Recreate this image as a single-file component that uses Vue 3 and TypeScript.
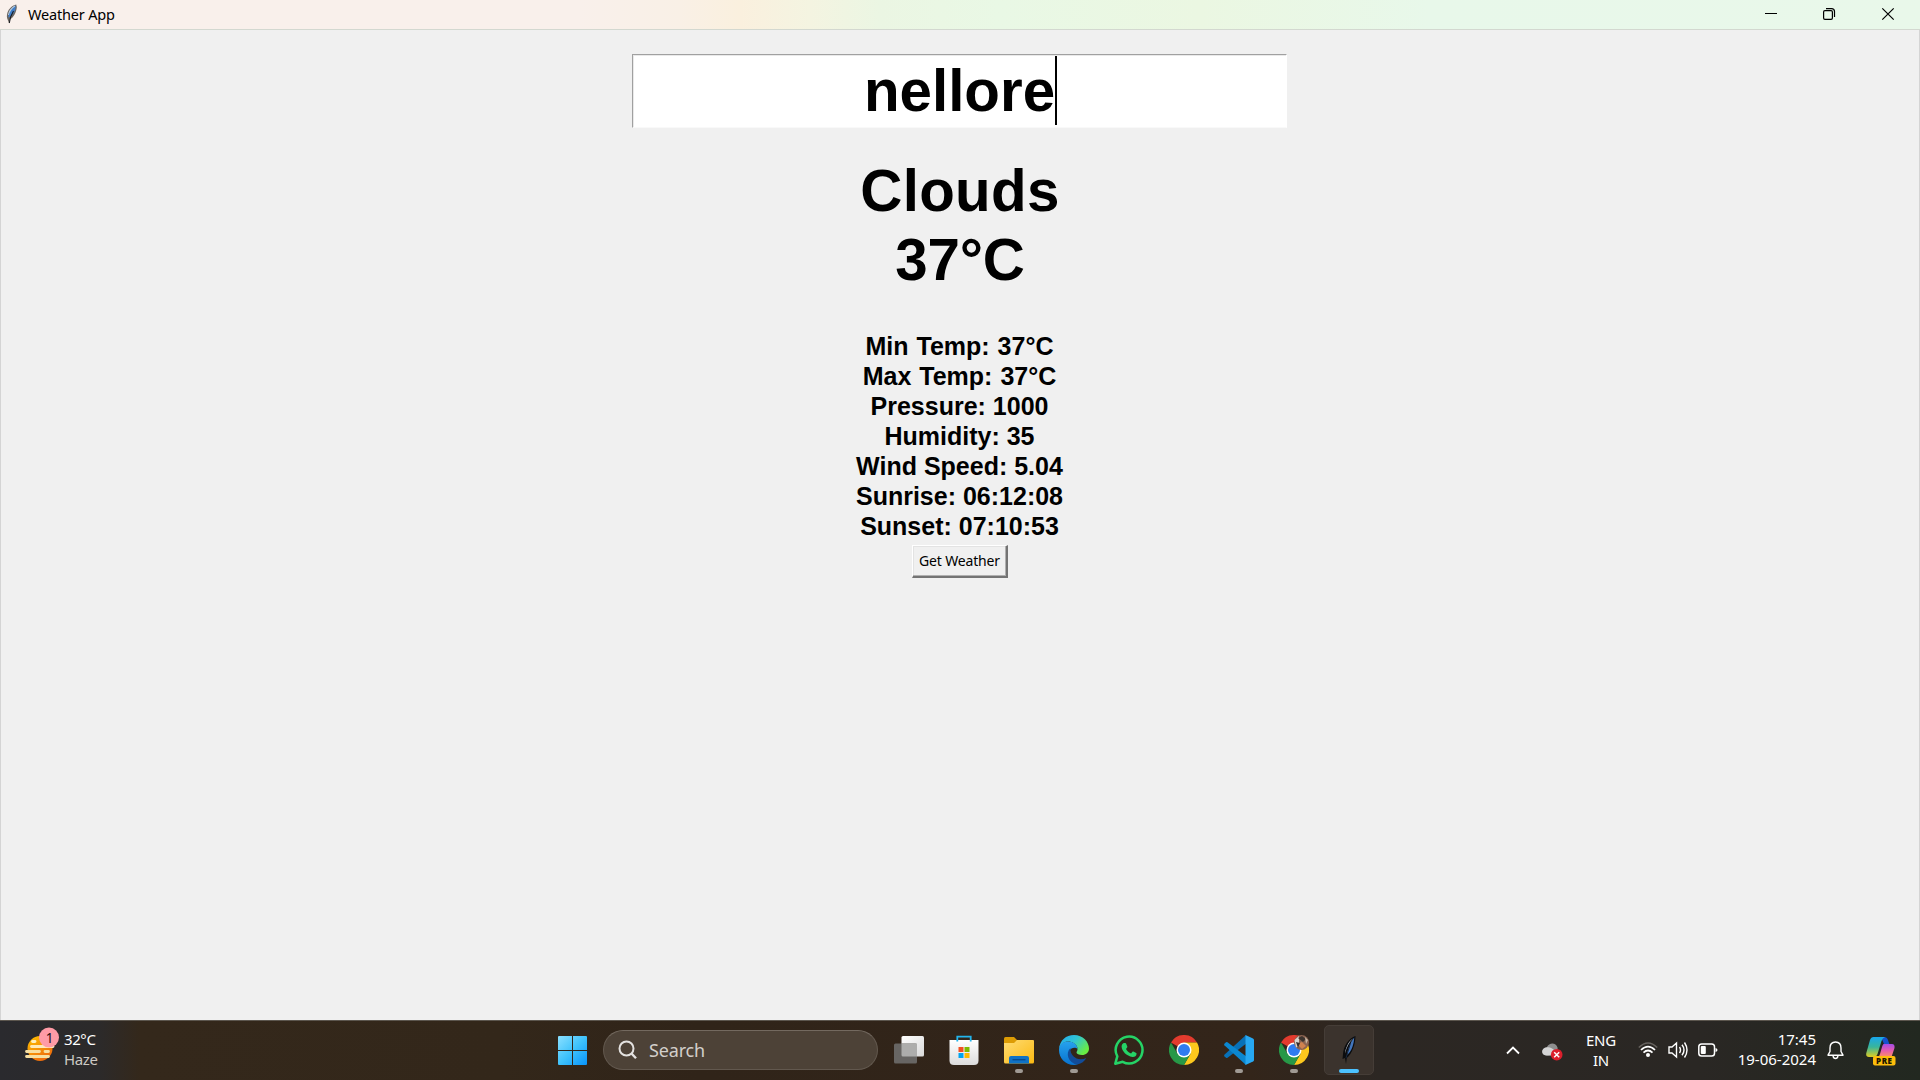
<script setup lang="ts">
const details: string[] = [
  'Min Temp: 37°C',
  'Max Temp: 37°C',
  'Pressure: 1000',
  'Humidity: 35',
  'Wind Speed: 5.04',
  'Sunrise: 06:12:08',
  'Sunset: 07:10:53',
]
</script>

<template>
  <div class="screen">
    <header class="titlebar">
      <svg class="feather" width="12" height="20" viewBox="0 0 12 20">
        <path d="M10.2.6C6.500 1.500 3 4.500 1.500 8.500.6 11.500.7 13.500 1.800 16L3.200 19.500 4 15.500C7.500 13.500 10.500 8 10.800 3Z" fill="#6b6661" />
        <path d="M9.700 1.600C6 3.500 3 7 2.300 13.500 6.500 12 9.800 7.500 9.700 1.600Z" fill="#3f7fcb" />
        <path d="M8.800 2C5 4.500 3 8 2.400 11" stroke="#b8cce0" stroke-width="1.100" fill="none" />
        <path d="M7.500 7C5.500 10 4 13 3.300 19" stroke="#16181c" stroke-width="1.100" fill="none" />
      </svg>
      <span class="title">Weather App</span>
      <div class="controls">
        <svg width="58" height="29" viewBox="0 0 58 29"><path d="M23 13.500h12" stroke="#000" /></svg>
        <svg width="58" height="29" viewBox="0 0 58 29" fill="none" stroke="#000" stroke-width="1.200">
          <rect x="23.600" y="10.600" width="8.800" height="8.800" rx="1.300" />
          <path d="M26 8.600h5.500q3 0 3 3v5.500" />
        </svg>
        <svg width="60" height="29" viewBox="0 0 60 29"><path d="M24.300 8.300l11.400 11.400M35.700 8.300L24.300 19.700" stroke="#000" stroke-width="1.200" /></svg>
      </div>
    </header>

    <main class="client">
      <div class="entry"><span>nellore</span><i class="caret"></i></div>
      <div class="summary">
        <div>Clouds</div>
        <div class="temp">37°C</div>
      </div>
      <div class="details">
        <div v-for="line in details" :key="line">{{ line }}</div>
      </div>
      <button class="fetch" type="button">Get Weather</button>
    </main>

    <footer class="taskbar">
      <div class="weather">
        <svg width="36" height="38" viewBox="0 0 36 38">
          <defs>
            <linearGradient id="sun" x1="0" y1="0" x2=".6" y2="1"><stop offset="0" stop-color="#ffc400" /><stop offset="1" stop-color="#ee6a0c" /></linearGradient>
          </defs>
          <circle cx="16" cy="21.500" r="12.500" fill="url(#sun)" />
          <g stroke-linecap="round" stroke-width="2.800" stroke="#f7dfa0">
            <path d="M8.500 14.500h2.500" stroke="#fff0c0" /><path d="M7.500 19.500H29" stroke="#ffeab8" /><path d="M2.500 24.500h13M21 24.500h3.500M2.500 29.500h22" />
          </g>
          <circle cx="25" cy="10.500" r="10" fill="#ff9ba6" />
          <text x="25.500" y="15.500" class="badge-text">1</text>
        </svg>
        <div class="weather-text"><span>32°C</span><span class="dim">Haze</span></div>
      </div>

      <div class="apps">
        <svg class="start" width="29" height="29" viewBox="0 0 29 29">
          <defs><linearGradient id="win" x1="0" y1="0" x2="29" y2="29" gradientUnits="userSpaceOnUse"><stop offset="0" stop-color="#8be0ff" /><stop offset=".5" stop-color="#3fc2fb" /><stop offset="1" stop-color="#0894fb" /></linearGradient></defs>
          <path d="M1 0h13v14H0V1q0-1 1-1ZM15 0h13q1 0 1 1v13H15ZM0 15h14v14H1q-1 0-1-1ZM15 15h14v13q0 1-1 1H15Z" fill="url(#win)" />
        </svg>

        <div class="search">
          <svg width="20" height="20" viewBox="0 0 20 20" fill="none" stroke="#e4e2e0" stroke-width="2"><circle cx="8.500" cy="8.500" r="7" /><path d="M13.500 13.500l4.500 4.800" stroke-width="2.400" /></svg>
          <span>Search</span>
        </div>

        <div class="app">
          <svg width="30" height="30" viewBox="0 0 30 30">
            <defs><linearGradient id="tv" x1="0" y1="0" x2="1" y2="1"><stop offset="0" stop-color="#fff" /><stop offset="1" stop-color="#d9d9d9" /></linearGradient></defs>
            <rect x="7.500" y="1" width="22.500" height="20.500" rx="1.500" fill="url(#tv)" />
            <rect x="0" y="8.500" width="23" height="20" rx="1.500" fill="#676563" />
            <path d="M7.500 8.500H23v13H9q-1.500 0-1.500-1.500Z" fill="#adadac" />
          </svg>
        </div>
        <div class="app">
          <svg width="30" height="30" viewBox="0 0 30 30">
            <defs><linearGradient id="bag" x1="0" y1="0" x2="0" y2="1"><stop offset="0" stop-color="#fff" /><stop offset="1" stop-color="#dcdcdc" /></linearGradient></defs>
            <path d="M.5 5h29v20.500q0 4.500-4.500 4.500H5Q.5 30 .5 25.500Z" fill="url(#bag)" />
            <path d="M8.300 6.500V1.700h13.400v4.800" stroke="#23b5ec" stroke-width="1.800" fill="none" />
            <path d="M9.500 12h5v5h-5Z" fill="#f25022" /><path d="M15.500 12h5v5h-5Z" fill="#7fba00" /><path d="M9.500 18h5v5h-5Z" fill="#00a4ef" /><path d="M15.500 18h5v5h-5Z" fill="#ffb900" />
          </svg>
        </div>
        <div class="app running">
          <svg width="30" height="30" viewBox="0 0 30 30">
            <defs><linearGradient id="fold" x1="0" y1="0" x2="1" y2="1"><stop offset="0" stop-color="#ffdc73" /><stop offset="1" stop-color="#fbb912" /></linearGradient></defs>
            <path d="M0 3.500Q0 2 1.500 2h8.500l3 3v3H0Z" fill="#dd9c04" />
            <path d="M0 8h10l3-3h16q1 0 1 1v21q0 1.500-1.500 1.500h-27Q0 28.500 0 27Z" fill="url(#fold)" />
            <path d="M5 28.500V23q0-2 2-2h16q2 0 2 2v5.500Z" fill="#0f72c6" /><path d="M8.500 24.700h13" stroke="#064b91" stroke-width="1.400" />
          </svg>
        </div>
        <div class="app running">
          <svg width="30" height="30" viewBox="0 0 30 30">
            <defs>
              <linearGradient id="e1" x1="0" y1="0" x2="1" y2=".6"><stop offset="0" stop-color="#22a7ee" /><stop offset=".5" stop-color="#30c4d5" /><stop offset="1" stop-color="#69ec43" /></linearGradient>
              <linearGradient id="e2" x1="0" y1="0" x2="0" y2="1"><stop offset="0" stop-color="#26a2ee" /><stop offset="1" stop-color="#0872ce" /></linearGradient>
            </defs>
            <path d="M0 14C1 5 7 0 15 0c9 0 15 7 15 13.500 0 4-3 6.500-7 6.500-3 0-5.500-1-5.500-2.500 0-1 1-1.500 1-3.500C18.500 9 13 6.500 9 6.500 5 6.500 2 9 0 14Z" fill="url(#e1)" />
            <path d="M0 15C0 9 5 6.500 9 6.500c5.500 0 9.500 3.500 9.500 7.500-1.500-2-6.500-2-8 2-1.500 5 2 12 8.500 13.500C8 32 0 24 0 15Z" fill="url(#e2)" />
            <path d="M11.500 13C6 18 9 28 18.500 29.600c4-1 7-3.300 8.800-6.600C19 27 10.500 21 11.500 13Z" fill="#124c99" />
          </svg>
        </div>
        <div class="app">
          <svg width="30" height="30" viewBox="0 0 30 30">
            <path d="M1.300 28.700l2-7.300A13.400 13.400 0 1 1 8.700 26.800Z" fill="none" stroke="#25d366" stroke-width="2.500" stroke-linejoin="round" />
            <path d="M9.800 8h1.500q.6 0 .9.700l1.100 2.700q.2.600-.2 1.100l-1.100 1.400c1.200 2.200 2.800 3.500 5.100 4.500l1.300-1.600q.4-.5 1-.2l2.800 1.300q.5.300.4.900c-.2 2.300-2 3.400-4.100 3.200C12.500 21.200 7.800 16 7.600 11.800 7.500 10 8.700 8.100 9.800 8Z" fill="#25d366" />
          </svg>
        </div>
        <div v-for="n in 3" :key="n" class="app" :class="{ running: n > 1 }">
          <svg v-if="n !== 2" width="30" height="30" viewBox="0 0 30 30">
            <path d="M15 15L2 7.500A15 15 0 0 1 28 7.500H15Z" fill="#e33b2e" />
            <path d="M15 7.500h13A15 15 0 0 1 15 30l6.500-11.200Z" fill="#fdc81d" />
            <path d="M2 7.500A15 15 0 0 0 15 30l6.500-11.200H8.500Z" fill="#279847" />
            <circle cx="15" cy="15" r="7.500" fill="#fff" /><circle cx="15" cy="15" r="6" fill="#2f7cf0" />
            <g v-if="n === 3">
              <circle cx="22.500" cy="7.500" r="7.500" fill="#8b6350" />
              <path d="M15.500 5L20 1v10l-3 1.500Z" fill="#d8d5cf" /><path d="M19 3l4-2 4 3-3 3Z" fill="#3c342f" /><path d="M18 9l5-2 4 4-4 3Z" fill="#d0824f" /><path d="M26 2l3 3-2 4Z" fill="#c9b9a7" /><path d="M17 7l4 1-2 5Z" fill="#342c2c" />
            </g>
          </svg>
          <svg v-else width="30" height="30" viewBox="0 0 30 30">
            <path d="M22 0v8.800L3.500 22.700q-.8.500-1.500 0L.4 21.200q-.6-.7 0-1.400Z" fill="#0871b8" />
            <path d="M22 30v-8.800L3.500 7.300Q2.700 6.800 2 7.300L.4 8.800q-.6.700 0 1.400Z" fill="#0b87d1" />
            <path d="M21.500 0L29 3.500q1 .5 1 1.500v20q0 1-1 1.500L21.500 30Z" fill="#27a8f2" />
          </svg>
        </div>
        <div class="app active">
          <svg width="16" height="30" viewBox="0 0 16 30">
            <path d="M14.500 1C8 3 2.500 11 2 19l-.5 5L4 23l1 6 .8-6C11 19 14.500 9 14.500 1Z" fill="#0b0c0e" />
            <path d="M13.200 2.500C11 5 7 12 6 20 10.500 16.500 13 9 13.200 2.500Z" fill="#4376bd" />
            <path d="M12 3.500C7.500 6.500 4.500 13 4 18.500 5.500 12 8 7.500 12 3.500Z" fill="#d3dce6" />
            <path d="M9.500 8L5 23" stroke="#16263d" stroke-width="1" />
          </svg>
        </div>
      </div>

      <div class="tray">
        <svg class="chevron" width="14" height="9" viewBox="0 0 14 9"><path d="M1 7.500L7 1.500l6 6" fill="none" stroke="#fff" stroke-width="1.800" /></svg>
        <svg class="cloud" width="21" height="18" viewBox="0 0 21 18">
          <path d="M5 4C7-.5 14-.8 15.500 4.500c1 2-3 8.500-10.500 8C-1 12-1 4.500 5 4Z" fill="#8e8e8e" />
          <path d="M4.500 4.500c3-1 6 1 8 3v5H4C-1.500 12-1 5 4.500 4.500Z" fill="#d4d4d4" />
          <circle cx="14.700" cy="11.700" r="5.800" fill="#dc1f2c" /><path d="M12.200 9.200l5 5m0-5l-5 5" stroke="#fff" stroke-width="1.500" />
        </svg>
        <div class="lang"><span>ENG</span><span>IN</span></div>
        <svg class="wifi" width="20" height="16" viewBox="0 0 20 16" fill="none" stroke-width="1.500">
          <path d="M.8 5.500Q10-3.500 19.200 5.500" stroke="#67635f" /><path d="M3 8Q10 1 17 8M5.500 10.600q4.500-4.200 9 0" stroke="#fff" stroke-width="1.700" /><circle cx="10" cy="13" r="2" fill="#fff" />
        </svg>
        <svg class="volume" width="20" height="18" viewBox="0 0 20 18" fill="none" stroke="#fff" stroke-width="1.400">
          <path d="M1 6h3L8.500 2v14L4 12H1ZM11.500 6q2 3 0 6M14 3.800q4 5.200 0 10.400M16.500 1.500q5 7.500 0 15" />
        </svg>
        <svg class="battery" width="20" height="14" viewBox="0 0 20 14"><rect x=".8" y="1" width="15.700" height="12" rx="2.800" fill="none" stroke="#fff" stroke-width="1.500" /><rect x="2.800" y="3" width="5" height="8" rx="1" fill="#fff" /><path d="M17.500 5q2 .3 2 2t-2 2Z" fill="#fff" /></svg>
        <div class="clock"><span>17:45</span><span>19-06-2024</span></div>
        <svg class="bell" width="17" height="19" viewBox="0 0 17 19" fill="none" stroke="#fff" stroke-width="1.400"><path d="M8.500 1C4.500 1 3 4 3 7v3.500L1 14.200h15L14 10.500V7c0-3-1.500-6-5.500-6Z" stroke-linejoin="round" /><path d="M6 15q.5 2.500 2.500 2.500T11 15" /></svg>
        <svg class="copilot" width="30" height="29" viewBox="0 0 30 29">
          <defs>
            <linearGradient id="c1" x1="0" y1="0" x2="0" y2="1"><stop offset="0" stop-color="#18a7ed" /><stop offset=".5" stop-color="#38b59b" /><stop offset="1" stop-color="#e0cd20" /></linearGradient>
            <linearGradient id="c2" x1="0" y1="0" x2="0" y2="1"><stop offset="0" stop-color="#a34de8" /><stop offset=".5" stop-color="#e55baf" /><stop offset="1" stop-color="#fc9064" /></linearGradient>
          </defs>
          <path d="M15 0h3q3 0 4 3l1.300 4H18Z" fill="#1551cf" />
          <path d="M7.500 0H19q-2.500 1-3.500 4l-4 13q-1 3-4 3H3Q-.5 20 .3 16L4 3Q5 0 7.500 0Z" fill="url(#c1)" />
          <path d="M17.500 7H26q3 0 2.500 4l-3 9H12q1.500-1 2-3l2-7q.5-2 1.500-3Z" fill="url(#c2)" />
          <rect x="7" y="19" width="22.500" height="9.500" rx="2" fill="#fdbd0b" />
          <text x="18.300" y="26.600" class="pre">PRE</text>
        </svg>
      </div>
    </footer>
  </div>
</template>

<style>
body { margin: 0; overflow: hidden; }
</style>

<style scoped>
.screen {
  width: 1920px;
  height: 1080px;
  display: flex;
  flex-direction: column;
  background: #f0f0f0;
  font-family: "Noto Sans", "Open Sans", sans-serif;
  color: #000;
}
.screen * { box-sizing: border-box; }
svg { display: block; flex: none; }
.titlebar {
  height: 30px;
  flex: none;
  display: flex;
  align-items: flex-start;
  border-bottom: 1px solid #d3d8d0;
  background: linear-gradient(90deg, #f9f0eb 0, #f9f0eb 580px, #f9f0e6 680px, #faf0de 740px, #f4f4e1 810px, #ebf6e3 880px, #e9f8e5 1000px, #ebf7e2 1200px, #e8f8ea 1430px, #e9f8ea 1920px);
}
.feather { margin: 4px 0 0 6px; }
.title { margin-left: 10px; font-size: 14.500px; line-height: 29px; letter-spacing: -0.180px; }
.controls { margin: 0 2px 0 auto; display: flex; }
.client {
  flex: 1;
  display: flex;
  flex-direction: column;
  align-items: center;
  border: solid #d4d4d4;
  border-width: 0 1px;
  font-family: "Liberation Sans", Arial, sans-serif;
  font-weight: 700;
}
.entry {
  margin: 24px 1px 0 0;
  width: 655px;
  height: 74px;
  background: #fff;
  border: solid;
  border-width: 1px;
  border-color: #a0a0a0 #fff #f9f9f9 #a0a0a0;
  box-shadow: inset 1px 1px 0 #e9e9e9;
  display: flex;
  justify-content: center;
  font-size: 58.300px;
  line-height: 72px;
}
.caret { width: 2px; height: 69px; margin: 1px -2px 0 0; background: #000; }
.summary { margin-top: 28px; font-size: 58.300px; line-height: 69px; text-align: center; letter-spacing: 0.300px; }
.temp { letter-spacing: -0.200px; }
.details { margin: 37px 1px 0 0; font-size: 25px; line-height: 30px; text-align: center; }
.details div:nth-child(-n + 2) { word-spacing: 1px; }
.fetch {
  margin-top: 4px;
  width: 96px;
  height: 33px;
  padding: 0 0 2px;
  border: solid;
  border-width: 1px 2px 2px 1px;
  border-color: #fff #747474 #747474 #fff;
  box-shadow: inset -1px -1px 0 #b0b0b0, inset 1px 1px 0 #e3e3e3;
  background: #f0f0f0;
  color: #000;
  font: 14px "Noto Sans", sans-serif;
  letter-spacing: -0.150px;
  white-space: nowrap;
}
.taskbar {
  height: 60px;
  flex: none;
  position: relative;
  display: flex;
  justify-content: space-between;
  border-top: 1px solid #5c564e;
  background: linear-gradient(90deg, #2a2a2e 0, #2c2a2a 100px, #34281b 140px, #33271a 500px, #302419 700px, #33251a 1250px, #2c2723 1380px, #2a2724 1700px, #222820 1920px);
  color: #fff;
}
.weather { display: flex; margin: 6px 0 0 24px; width: 120px; }
.badge-text { font-size: 13.500px; fill: #1d1015; text-anchor: middle; }
.weather-text { margin: 2px 0 0 4px; display: flex; flex-direction: column; font-size: 15px; line-height: 20px; letter-spacing: -0.400px; }
.dim { color: #cdc9c4; }
.apps { position: absolute; left: 558px; top: 0; height: 57px; display: flex; align-items: center; }
.start { margin-top: 1px; }
.search {
  margin: 1px 3px 0 16px;
  width: 275px;
  height: 40px;
  display: flex;
  align-items: center;
  padding-left: 14px;
  gap: 11px;
  border-radius: 20px;
  border: 1px solid #62584e;
  border-top-color: #73695f;
  background: #4d4237;
  color: #d3cfcb;
  font-size: 18px;
  line-height: 24px;
  letter-spacing: -0.150px;
}
.app { position: relative; width: 55px; height: 50px; display: flex; align-items: center; justify-content: center; }
.running::after, .active::after {
  content: "";
  position: absolute;
  bottom: 2px;
  width: 8px;
  height: 4px;
  border-radius: 2px;
  background: #a09a94;
}
.active { width: 50px; margin-left: 3px; border-radius: 5px; background: #3b332d; border: 1px solid #453d37; }
.active::after { width: 20px; background: #4cc2ff; bottom: 1px; }
.tray { display: flex; align-items: center; font-size: 15px; line-height: 20px; height: 58px; }
.chevron { margin-right: 22px; }
.cloud { margin: 3px 23px 0 0; }
.lang { width: 30px; display: flex; flex-direction: column; align-items: center; margin: -1px 22px 0 0; letter-spacing: -0.200px; }
.wifi { margin-right: 10px; }
.volume { margin-right: 10px; }
.battery { margin-right: 20px; }
.clock { width: 78px; display: flex; flex-direction: column; align-items: flex-end; margin: -2px 11px 0 0; white-space: nowrap; }
.bell { margin-right: 22px; }
.copilot { margin: 3px 24px 0 0; }
.pre { font: 900 8px "Noto Sans", sans-serif; fill: #1c1600; text-anchor: middle; letter-spacing: 0.500px; }
</style>
